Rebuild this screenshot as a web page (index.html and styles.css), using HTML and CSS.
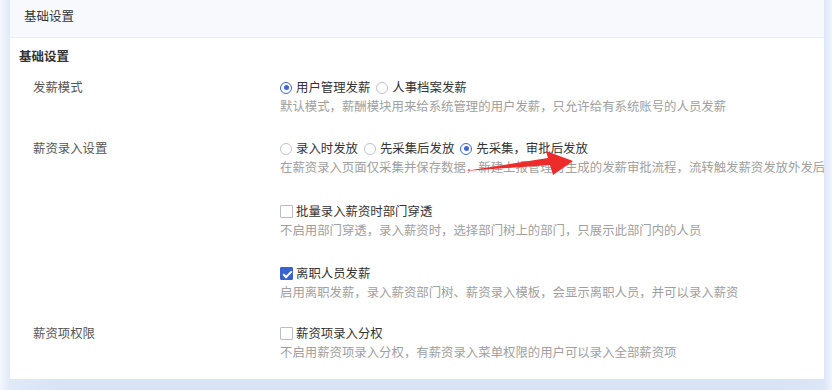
FILE: index.html
```html
<!DOCTYPE html>
<html lang="zh">
<head>
<meta charset="utf-8">
<link rel="stylesheet" href="styles.css">
</head>
<body>
<div class="card">
  <div class="card-head">基础设置</div>
  <div class="card-body">
    <div class="section-title">基础设置</div>

    <div class="row">
      <div class="label">发薪模式</div>
      <div class="field">
        <div class="opts">
          <span class="opt"><span class="radio on"></span>用户管理发薪</span>
          <span class="opt"><span class="radio"></span>人事档案发薪</span>
        </div>
        <div class="desc">默认模式，薪酬模块用来给系统管理的用户发薪，只允许给有系统账号的人员发薪</div>
      </div>
    </div>

    <div class="row">
      <div class="label">薪资录入设置</div>
      <div class="field">
        <div class="opts">
          <span class="opt"><span class="radio"></span>录入时发放</span>
          <span class="opt"><span class="radio"></span>先采集后发放</span>
          <span class="opt"><span class="radio on"></span>先采集，审批后发放</span>
        </div>
        <div class="desc">在薪资录入页面仅采集并保存数据，新建上报管理时生成的发薪审批流程，流转触发薪资发放外发后发放</div>
      </div>
    </div>

    <div class="row">
      <div class="label"></div>
      <div class="field">
        <div class="opts"><span class="opt"><span class="check"></span>批量录入薪资时部门穿透</span></div>
        <div class="desc">不启用部门穿透，录入薪资时，选择部门树上的部门，只展示此部门内的人员</div>
      </div>
    </div>

    <div class="row">
      <div class="label"></div>
      <div class="field">
        <div class="opts"><span class="opt"><span class="check on"></span>离职人员发薪</span></div>
        <div class="desc">启用离职发薪，录入薪资部门树、薪资录入模板，会显示离职人员，并可以录入薪资</div>
      </div>
    </div>

    <div class="row">
      <div class="label">薪资项权限</div>
      <div class="field">
        <div class="opts"><span class="opt"><span class="check"></span>薪资项录入分权</span></div>
        <div class="desc">不启用薪资项录入分权，有薪资录入菜单权限的用户可以录入全部薪资项</div>
      </div>
    </div>
  </div>
</div>
<svg class="arrow" width="832" height="390" viewBox="0 0 832 390">
  <polygon points="465,171 548,158 546,151 573,161 553,175 550,165" fill="#ee2b2b"/>
</svg>
</body>
</html>
```

FILE: styles.css
```css
html, body {
  margin: 0;
  padding: 0;
}
body {
  width: 832px;
  height: 390px;
  overflow: hidden;
  position: relative;
  font-family: "Noto Sans CJK SC", "Noto Sans", sans-serif;
  font-size: 12.4px;
  color: #333;
  background: linear-gradient(to right, #f4f7fd 0px, #e0e9f8 10px, #d8e3f5 60px, #d8e3f5 780px, #dde6f7 824px, #f0f4fc 832px);
}
.card {
  margin: 0 8px 0 10px;
  width: 814px;
  height: 379px;
  background: #fff;
  overflow: hidden;
}
.card-head {
  height: 37px;
  line-height: 32px;
  padding-left: 14px;
  font-size: 12.5px;
  color: #333;
  background: #f8f9fc;
  border-bottom: 1px solid #eceef3;
}
.card-body {
  padding: 8px 0 0 9px;
}
.section-title {
  font-size: 12.5px;
  font-weight: bold;
  line-height: 20px;
  color: #333;
  margin-bottom: 12px;
}
.row {
  display: flex;
  margin-bottom: 24px;
}
.row:nth-child(3) { margin-bottom: 26px; }
.row:nth-child(4) { margin-bottom: 25px; }
.row:nth-child(5) { margin-bottom: 23px; }
.label {
  width: 247px;
  flex: none;
  padding-left: 14px;
  line-height: 19px;
  color: #555;
}
.field {
  flex: 1;
  min-width: 0;
}
.opts {
  display: flex;
  gap: 6px;
  line-height: 19px;
  height: 19px;
}
.opt {
  display: inline-flex;
  align-items: center;
  white-space: nowrap;
  color: #333;
}
.radio {
  width: 12px;
  height: 12px;
  box-sizing: border-box;
  border: 1px solid #bfc3cb;
  border-radius: 50%;
  margin-right: 4px;
  position: relative;
  flex: none;
}
.radio.on {
  border-color: #3c67d6;
}
.radio.on::after {
  content: "";
  position: absolute;
  left: 2.5px;
  top: 2.5px;
  width: 5px;
  height: 5px;
  border-radius: 50%;
  background: #3c67d6;
}
.check {
  width: 13px;
  height: 13px;
  box-sizing: border-box;
  border: 1px solid #b9bdc5;
  border-radius: 1px;
  margin-right: 3px;
  position: relative;
  flex: none;
}
.check.on {
  background: #3a63d2;
  border-color: #3a63d2;
}
.check.on::after {
  content: "";
  position: absolute;
  left: 3.5px;
  top: 0.5px;
  width: 3px;
  height: 7px;
  border: solid #fff;
  border-width: 0 2px 2px 0;
  transform: rotate(45deg);
}
.desc {
  line-height: 18px;
  color: #a0a0a0;
  white-space: nowrap;
  overflow: hidden;
}
.arrow {
  position: absolute;
  left: 0;
  top: 0;
  pointer-events: none;
}
```
